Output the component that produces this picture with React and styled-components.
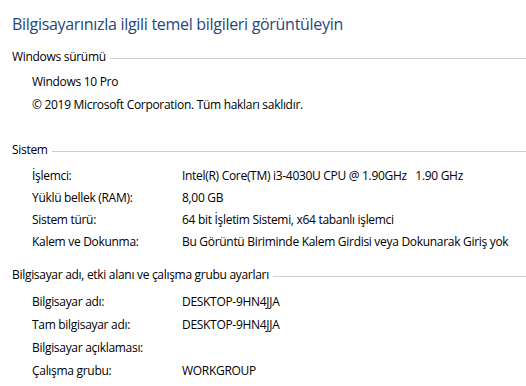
import styled, { createGlobalStyle } from "styled-components"

const GlobalStyle = createGlobalStyle`
    html, body {
        margin: 0;
        background: #ffffff;
    }
    body {
        font-family: "Open Sans", "Noto Sans", sans-serif;
        color: #000000;
    }
`

const sections = [
    {
        title: "Windows sürümü",
        pitch: 23,
        top: 6,
        after: 27,
        rows: [
            ["Windows 10 Pro"],
            ["© 2019 Microsoft Corporation. Tüm hakları saklıdır."],
        ],
    },
    {
        title: "Sistem",
        pitch: 22,
        top: 7,
        after: 16,
        rows: [
            ["İşlemci:", "Intel(R) Core(TM) i3-4030U CPU @ 1.90GHz   1.90 GHz"],
            ["Yüklü bellek (RAM):", "8,00 GB"],
            ["Sistem türü:", "64 bit İşletim Sistemi, x64 tabanlı işlemci"],
            ["Kalem ve Dokunma:", "Bu Görüntü Biriminde Kalem Girdisi veya Dokunarak Giriş yok"],
        ],
    },
    {
        title: "Bilgisayar adı, etki alanı ve çalışma grubu ayarları",
        pitch: 23,
        top: 8,
        after: 0,
        rows: [
            ["Bilgisayar adı:", "DESKTOP-9HN4JJA"],
            ["Tam bilgisayar adı:", "DESKTOP-9HN4JJA"],
            ["Bilgisayar açıklaması:", ""],
            ["Çalışma grubu:", "WORKGROUP"],
        ],
    },
]

export default function App() {
    return (
        <>
            <GlobalStyle />
            <Page>
                <Title>Bilgisayarınızla ilgili temel bilgileri görüntüleyin</Title>
                {sections.map((s) => (
                    <Section key={s.title} $after={s.after}>
                        <Header>
                            <span>{s.title}</span>
                            <Rule />
                        </Header>
                        <Rows $top={s.top}>
                            {s.rows.map((r, j) => (
                                <Row key={j} $pitch={s.pitch} $single={r.length === 1}>
                                    <span>{r[0]}</span>
                                    {r.length > 1 && <span>{r[1]}</span>}
                                </Row>
                            ))}
                        </Rows>
                    </Section>
                ))}
            </Page>
        </>
    )
}

const Page = styled.div`
    width: 526px;
    height: 386px;
    overflow: hidden;
    padding: 13px 0 0 12px;
    box-sizing: border-box;
`

const Title = styled.h1`
    margin: 0 0 15px 0;
    font-size: 16px;
    font-weight: 400;
    line-height: 22px;
    color: #26477a;
    letter-spacing: -0.3px;
`

const Section = styled.section`
    margin-bottom: ${(p) => p.$after}px;
`

const Header = styled.div`
    display: flex;
    align-items: center;
    gap: 4px;
    font-size: 12px;
    letter-spacing: -0.3px;
    line-height: 14px;
    height: 14px;
    white-space: nowrap;
`

const Rule = styled.div`
    flex: 1;
    height: 1px;
    background: #cfcfcf;
    margin-top: 2px;
`

const Rows = styled.div`
    display: flex;
    flex-direction: column;
    padding: ${(p) => p.$top}px 0 0 20px;
`

const Row = styled.div`
    display: grid;
    grid-template-columns: ${(p) => (p.$single ? "1fr" : "150px 1fr")};
    height: ${(p) => p.$pitch}px;
    align-items: center;
    font-size: 12px;
    letter-spacing: -0.3px;
    white-space: pre;
`
